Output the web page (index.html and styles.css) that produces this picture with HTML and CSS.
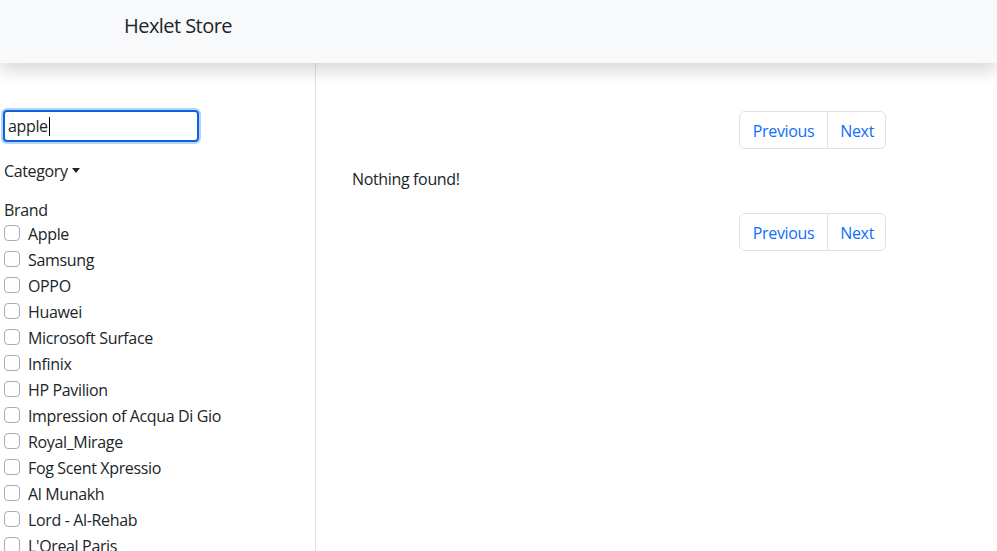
FILE: index.html
```html
<!DOCTYPE html>
<html lang="en">
<head>
<meta charset="utf-8">
<title>Hexlet Store</title>
<link rel="stylesheet" href="styles.css">
</head>
<body>
<header class="navbar">
  <span class="brand">Hexlet Store</span>
</header>
<div class="layout">
  <aside class="sidebar">
    <div class="search"><span class="search-text">apple</span><span class="caret-bar"></span></div>
    <div class="category">Category<span class="caret"></span></div>
    <div class="brand-label">Brand</div>
    <ul class="brands">
      <li><span class="check"></span>Apple</li>
      <li><span class="check"></span>Samsung</li>
      <li><span class="check"></span>OPPO</li>
      <li><span class="check"></span>Huawei</li>
      <li><span class="check"></span>Microsoft Surface</li>
      <li><span class="check"></span>Infinix</li>
      <li><span class="check"></span>HP Pavilion</li>
      <li><span class="check"></span>Impression of Acqua Di Gio</li>
      <li><span class="check"></span>Royal_Mirage</li>
      <li><span class="check"></span>Fog Scent Xpressio</li>
      <li><span class="check"></span>Al Munakh</li>
      <li><span class="check"></span>Lord - Al-Rehab</li>
      <li><span class="check"></span>L'Oreal Paris</li>
    </ul>
  </aside>
  <main class="main">
    <nav class="pager">
      <a class="page-link first">Previous</a><a class="page-link last">Next</a>
    </nav>
    <p class="empty">Nothing found!</p>
    <nav class="pager">
      <a class="page-link first">Previous</a><a class="page-link last">Next</a>
    </nav>
  </main>
</div>
</body>
</html>
```
FILE: styles.css
```css
* { box-sizing: border-box; }
html, body { margin: 0; height: 100%; overflow: hidden; }
body {
  font-family: "Open Sans", "Noto Sans", sans-serif;
  font-size: 16px;
  letter-spacing: -0.35px;
  color: #212529;
  background: #fff;
}
.navbar {
  height: 63px;
  background: #f8f9fa;
  box-shadow: 0 8px 16px rgba(0,0,0,.15);
  display: flex;
  align-items: center;
  padding-left: 124px;
  position: relative;
  z-index: 2;
}
.brand { font-size: 20px; line-height: 30px; margin-top: -12px; letter-spacing: -0.55px; }
.layout { display: flex; height: calc(100% - 63px); }
.sidebar {
  width: 316px;
  border-right: 1px solid #dee2e6;
  padding: 47px 0 0 4px;
}
.search {
  width: 196px; height: 32px;
  margin-left: -1px;
  border: 2px solid #0b63d8;
  border-radius: 4px;
  box-shadow: 0 0 0 2px rgba(13,110,253,.3);
  display: flex; align-items: center;
  padding-left: 3px;
  line-height: 24px;
}
.caret-bar { width: 1px; height: 19px; background: #000; margin-left: 1px; }
.category { margin-top: 17px; line-height: 24px; }
.caret {
  display: inline-block; margin-left: 4px; vertical-align: 4px;
  border-top: 5px solid #212529;
  border-left: 4px solid transparent;
  border-right: 4px solid transparent;
}
.brand-label { margin-top: 16px; line-height: 22px; }
.brands { list-style: none; margin: 0; padding: 0; }
.brands li { height: 26px; line-height: 26px; display: flex; align-items: center; }
.check {
  width: 16px; height: 16px;
  border: 1px solid #a8adb3;
  border-radius: 4px;
  margin-right: 8px;
  flex: none;
  margin-top: -2px;
}
.main { flex: 1; padding: 48px 111px 0 36px; }
.pager { display: flex; justify-content: flex-end; }
.page-link {
  display: block;
  padding: 7px 12px 5px;
  line-height: 24px;
  color: #0d6efd;
  border: 1px solid #dee2e6;
}
.page-link.first { border-radius: 6px 0 0 6px; padding-left: 13px; padding-right: 13px; }
.page-link.last { border-radius: 0 6px 6px 0; margin-left: -1px; padding-right: 11px; }
.empty { margin: 18px 0 22px; line-height: 24px; }
```
